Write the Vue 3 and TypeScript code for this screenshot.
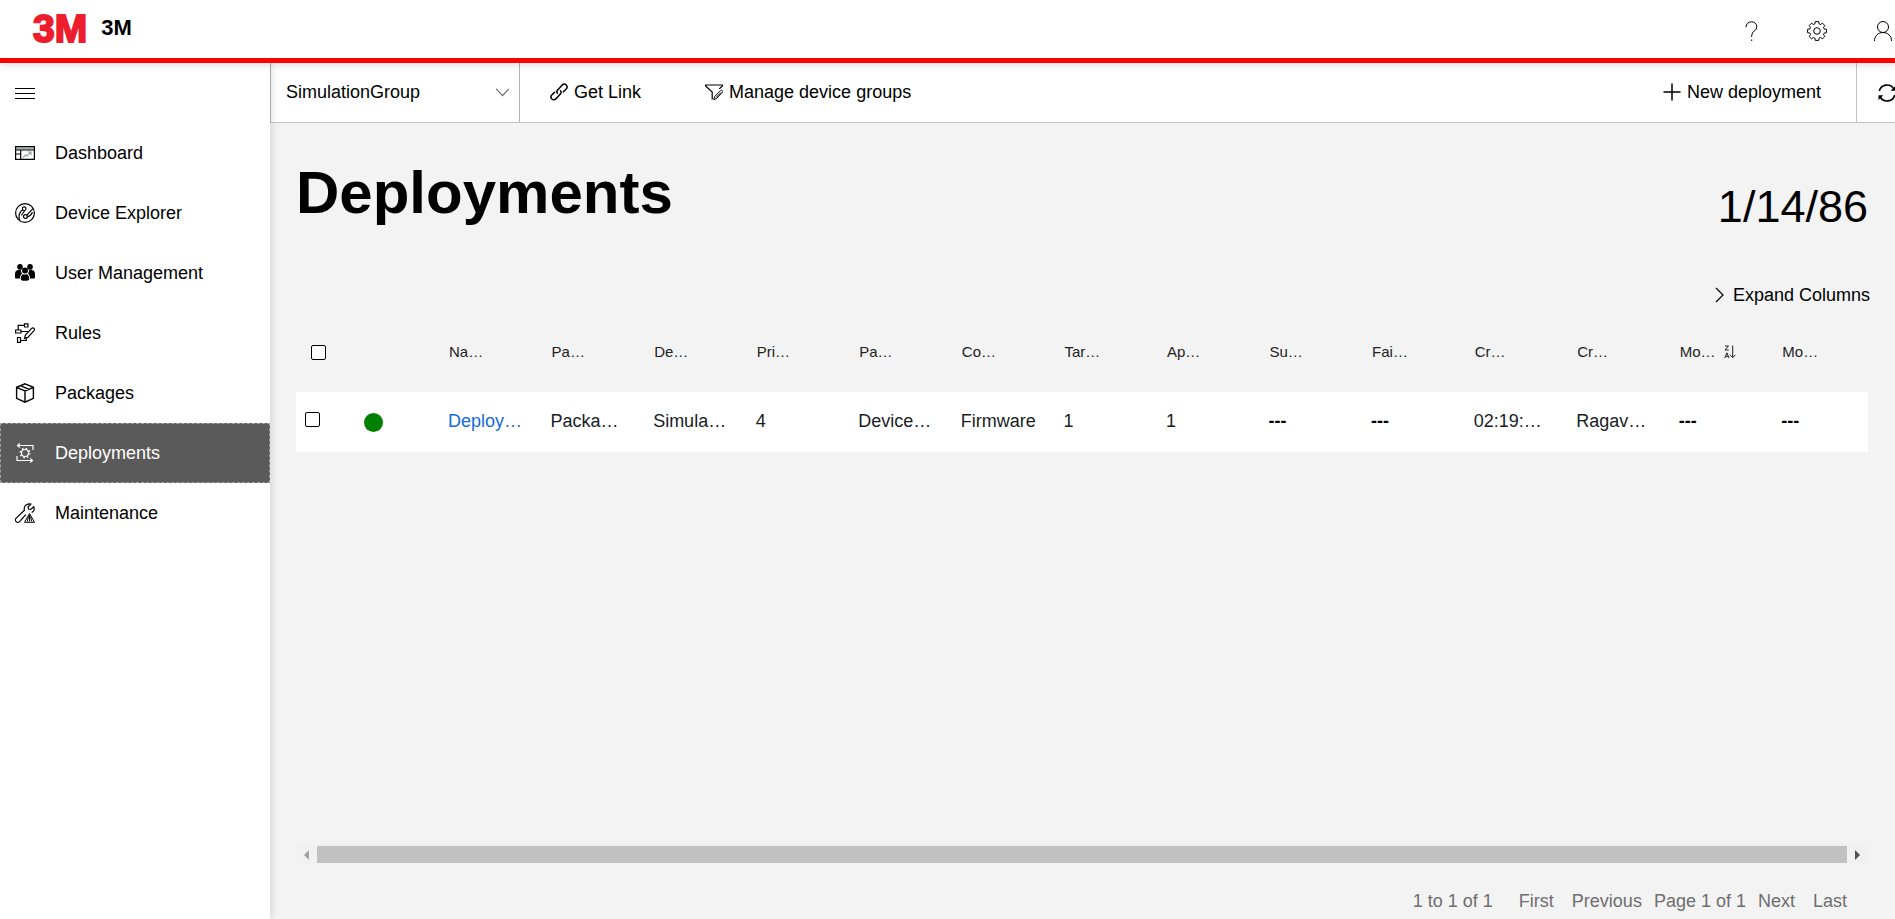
<script setup lang="ts">
import { ref } from 'vue'

interface NavItem {
  label: string
  icon: string
}

interface Column {
  head: string
  value: string
  sorted?: boolean
}

const navItems: NavItem[] = [
  { label: 'Dashboard', icon: 'dashboard' },
  { label: 'Device Explorer', icon: 'devices' },
  { label: 'User Management', icon: 'users' },
  { label: 'Rules', icon: 'rules' },
  { label: 'Packages', icon: 'packages' },
  { label: 'Deployments', icon: 'deployments' },
  { label: 'Maintenance', icon: 'maintenance' },
]

const columns: Column[] = [
  { head: 'Na…', value: 'Deploy…' },
  { head: 'Pa…', value: 'Packa…' },
  { head: 'De…', value: 'Simula…' },
  { head: 'Pri…', value: '4' },
  { head: 'Pa…', value: 'Device…' },
  { head: 'Co…', value: 'Firmware' },
  { head: 'Tar…', value: '1' },
  { head: 'Ap…', value: '1' },
  { head: 'Su…', value: '---' },
  { head: 'Fai…', value: '---' },
  { head: 'Cr…', value: '02:19:…' },
  { head: 'Cr…', value: 'Ragav…' },
  { head: 'Mo…', value: '---', sorted: true },
  { head: 'Mo…', value: '---' },
]

const active = ref('Deployments')
const group = ref('SimulationGroup')
const selected = ref(false)
</script>

<template>
  <div class="page">
    <header class="header">
      <a class="brand" href="#">
        <span class="logo">3M</span>
        <span class="brand-name">3M</span>
      </a>
      <div class="header-actions">
        <button type="button" aria-label="Help">
          <svg viewBox="0 0 20 20" class="thin"><path d="M5 6.2C5 3 7.2 .8 10.4 .8s5.4 2 5.4 4.9c0 4.4-5.1 4.300-5.100 8.800v1.500M10.700 18.500v1.500" /></svg>
        </button>
        <button type="button" aria-label="Settings">
          <svg viewBox="0 0 20 20" class="thin">
            <path d="M8.300 .6 11.700 .6 12.200 3 13.500 3.500 15.500 2.200 17.800 4.500 16.500 6.500 17 7.800 19.400 8.300 19.400 11.700 17 12.200 16.500 13.500 17.800 15.500 15.500 17.800 13.500 16.500 12.200 17 11.700 19.400 8.300 19.400 7.800 17 6.500 16.500 4.500 17.800 2.200 15.500 3.500 13.500 3 12.200 .6 11.700 .6 8.300 3 7.800 3.500 6.500 2.200 4.500 4.500 2.200 6.500 3.500 7.800 3z" />
            <circle cx="10" cy="10" r="3.300" />
          </svg>
        </button>
        <button type="button" aria-label="Account">
          <svg viewBox="0 0 20 20" class="thin"><circle cx="10" cy="6" r="5.500" /><path d="M1.500 20c0-5 3.500-8.500 8.500-8.500s8.500 3.500 8.500 8.500" /></svg>
        </button>
      </div>
    </header>

    <div class="body">
      <nav class="sidebar" aria-label="Main">
        <button type="button" class="nav-item" aria-label="Toggle navigation">
          <svg viewBox="0 0 20 20" class="menu"><path d="M0 5.500h20M0 10.500h20M0 15.500h20" /></svg>
        </button>
        <a
          v-for="item in navItems"
          :key="item.label"
          href="#"
          class="nav-item"
          :class="{ active: item.label === active }"
          @click.prevent="active = item.label"
        >
          <svg v-if="item.icon === 'dashboard'" viewBox="0 0 20 20">
            <path d="M1 5.500h18" class="muted" stroke-width="2" />
            <path d="M.6 3.600h18.800v12.800H.6zM.6 7h18.800M5.700 7v9.400M.6 11h5.100" stroke-width="1.200" />
            <path d="M8 14.500l2.500-2.500 1.500 1 3.500-3.500M12.500 9h3.500v3" class="muted" />
          </svg>
          <svg v-else-if="item.icon === 'devices'" viewBox="0 0 20 20">
            <circle cx="10" cy="10" r="9.400" />
            <circle cx="9.200" cy="5.700" r="1.800" />
            <circle cx="10.400" cy="13.500" r="1.900" />
            <path d="M7.700 6.700C4.500 8.800 3.400 12.500 4.500 17M9.500 7.500c0 1.800-2.800 2.500-2.800 5M11.800 12.100l6.200-6.400M12.300 13.900c2.200-.6 4.200-2.300 5.200-4.700" />
          </svg>
          <svg v-else-if="item.icon === 'users'" viewBox="0 0 20 20" class="solid">
            <circle cx="5" cy="3.900" r="2.800" />
            <circle cx="15" cy="3.900" r="2.800" />
            <circle cx="10" cy="7.500" r="3" />
            <path d="M5 15.500H1.200C.4 15.500 0 15 0 14V11c0-2.500 1.500-4 3.500-4h2.300c.1 1.500.5 2.700 1.300 3.500C5.700 11.700 5 13.300 5 15.500zM15 15.500h3.800c.8 0 1.200-.5 1.200-1.500v-3c0-2.500-1.500-4-3.500-4h-2.300c-.1 1.500-.5 2.700-1.300 3.500 1.400 1.200 2.100 2.800 2.100 5z" />
            <path d="M5.800 16.500c0-3.300 1.200-5.300 2.500-5.300.9.500 2.500.5 3.400 0 1.300 0 2.500 2 2.500 5.300 0 .7-1.900 1.300-4.200 1.300s-4.200-.6-4.200-1.300z" />
          </svg>
          <svg v-else-if="item.icon === 'rules'" viewBox="0 0 20 20">
            <path d="M9.500.8h3.500v3.200H9.500zM.6 7h5.400v3H.6zM2.500 14.500h3v4.800h-3zM9.500 2.400H3.200V7M6 8.500h7.500M5.500 17.500h5.800v-2.200" />
            <path d="M19 5.300c.8.800.5 1.900-.2 2.600l-6 6.500-3.300 1.100.9-3.400 6-6.500c.8-.8 1.800-1 2.600-.3z" />
          </svg>
          <svg v-else-if="item.icon === 'packages'" viewBox="0 0 20 20">
            <path d="M10 .8l8.400 3.500v11L10 19.200l-8.400-3.900v-11zM1.600 4.300L10 8l8.400-3.700M10 8v11.200M5.500 2.700l8.500 3.600" stroke-width="1.400" />
          </svg>
          <svg v-else-if="item.icon === 'deployments'" viewBox="0 0 20 20">
            <path d="M18 7V2.500H2.500M4.800.5l-2.300 2 2.300 2M2 13v4.500h15.500M15.200 15.500l2.300 2-2.300 2" stroke-width="1.200" />
            <circle cx="10" cy="10" r="3.500" />
            <circle cx="10" cy="10" r="4.700" stroke-width="1.400" stroke-dasharray="1.600 2.090" />
          </svg>
          <svg v-else viewBox="0 0 20 20">
            <path d="M1.200 18.600c-1-1-1-2.400 0-3.400l8.200-7.900C8.500 3.500 11 .6 14.800.8l1 .3-2.700 2.700.4 2.200 2.300.4 2.900-2.700c1 2.300.2 4.700-2 5.900M1.200 18.600c1 1 2.400 1 3.400 0l6.200-7" />
            <path d="M14.500 10.500L9.500 19.300h10zM13.500 13.500l-1.300 5M14.500 12v6.500M15.500 13.500l1.300 5" stroke-width="1" />
          </svg>
          <span>{{ item.label }}</span>
        </a>
      </nav>

      <main class="main">
        <div class="toolbar">
          <div class="group">
            <select v-model="group" aria-label="Device group">
              <option>SimulationGroup</option>
            </select>
            <svg class="caret" viewBox="0 0 16 10"><path d="M1 1l7 7.500L15 1" /></svg>
          </div>
          <button type="button" class="tool">
            <svg viewBox="0 0 18 18">
              <path d="M7.800 10.700C6.500 9.400 6.700 7.900 7.700 6.900l4.500-4.800c1.200-1.200 2.900-1.200 4-.1 1.100 1.100 1.100 2.700 0 3.900l-3.300 3.400M10.200 7.300c1.300 1.300 1.100 2.800.1 3.800l-4.500 4.800c-1.200 1.200-2.900 1.200-4 .1-1.100-1.100-1.100-2.700 0-3.900l3.300-3.400" stroke-width="1.500" />
            </svg>
            Get Link
          </button>
          <button type="button" class="tool manage">
            <svg viewBox="0 0 18 18">
              <path d="M7.200 16.500V9L.6 2.900V2h16.800v.9l-3.200 3" />
              <path d="M8.800 16.700l.7-3 6-6c.7-.6 1.500-.5 1.900 0s.4 1.200-.2 1.800l-5.700 6zM11 14.500l5-5" stroke-width="1" />
            </svg>
            Manage device groups
          </button>
          <button type="button" class="tool create">
            <svg viewBox="0 0 18 18"><path d="M9 .5v17M.5 9h17" stroke-width="1.500" /></svg>
            New deployment
          </button>
          <button type="button" class="refresh" aria-label="Refresh">
            <svg viewBox="0 0 18 18">
              <path d="M1.300 7A7.900 7.900 0 0 1 15.800 5M16.700 11A7.900 7.900 0 0 1 2.200 13" stroke-width="1.600" />
              <path d="M17.500 2v4.800h-4.800zM.5 16v-4.800h4.800z" class="fill" />
            </svg>
          </button>
        </div>

        <section class="content">
          <div class="heading">
            <h1>Deployments</h1>
            <span class="date">1/14/86</span>
          </div>
          <div class="expand-row">
            <button type="button" class="expand">
              <svg viewBox="0 0 10 16"><path d="M1 1l7 7-7 7" /></svg>
              Expand Columns
            </button>
          </div>

          <table class="grid">
            <colgroup>
              <col class="col-check" />
              <col class="col-status" />
              <col v-for="(c, i) in columns" :key="i" />
            </colgroup>
            <thead>
              <tr>
                <th><input v-model="selected" type="checkbox" aria-label="Select all rows" /></th>
                <th></th>
                <th v-for="(c, i) in columns" :key="i">
                  <span class="head">
                    {{ c.head }}
                    <svg v-if="c.sorted" viewBox="0 0 12 14" aria-label="Sorted descending">
                      <path d="M1 1h3.500L1 5h3.700M.8 13L2.900 7.800 5 13M1.600 11.300h2.600M8.700.5v12M6 9.800l2.700 2.900 2.700-2.900" />
                    </svg>
                  </span>
                </th>
              </tr>
            </thead>
            <tbody>
              <tr>
                <td><input v-model="selected" type="checkbox" aria-label="Select row" /></td>
                <td><span class="status"></span></td>
                <td v-for="(c, i) in columns" :key="i" :class="{ empty: c.value === '---' }">
                  <a v-if="i === 0" href="#">{{ c.value }}</a>
                  <template v-else>{{ c.value }}</template>
                </td>
              </tr>
            </tbody>
          </table>

          <div class="scrollbar">
            <button type="button" class="arrow off" aria-label="Scroll left">
              <svg viewBox="0 0 5 10"><path d="M5 0v10L0 5z" /></svg>
            </button>
            <div class="thumb"></div>
            <button type="button" class="arrow" aria-label="Scroll right">
              <svg viewBox="0 0 5 10"><path d="M0 0v10l5-5z" /></svg>
            </button>
          </div>

          <div class="pager">
            <span class="range">1 to 1 of 1</span>
            <button type="button">First</button>
            <button type="button" class="prev">Previous</button>
            <span>Page 1 of 1</span>
            <button type="button" class="next">Next</button>
            <button type="button">Last</button>
          </div>
        </section>
      </main>
    </div>
  </div>
</template>

<style>
body {
  margin: 0;
  overflow-x: hidden;
}
</style>

<style scoped>
.page {
  display: flex;
  flex-direction: column;
  min-height: 100vh;
  overflow: hidden;
  background: #f3f3f3;
  color: #000;
  font-family: "Liberation Sans", Arial, sans-serif;
  font-size: 18px;
  line-height: 20px;
}

*,
*::before,
*::after {
  box-sizing: border-box;
}

button {
  padding: 0;
  border: 0;
  background: none;
  color: inherit;
  font: inherit;
  cursor: pointer;
}

svg {
  flex: none;
  fill: none;
  stroke: currentColor;
  stroke-width: 1.2;
}

.fill,
.solid {
  fill: currentColor;
  stroke: none;
}

.muted {
  stroke: #a0a4aa;
}

.thin,
.menu {
  stroke-width: 1;
}

.header {
  display: flex;
  justify-content: space-between;
  align-items: center;
  position: relative;
  z-index: 3;
  height: 63px;
  padding: 0 2px 0 33px;
  border-bottom: 5px solid #f00;
  background: #fff;
  box-shadow: 0 0 10px rgba(0, 0, 0, 0.2);
}

.brand {
  display: flex;
  align-items: center;
  gap: 14px;
  color: #000;
  text-decoration: none;
  font-weight: bold;
}

.logo {
  color: #ee1d2d;
  font-size: 39px;
  line-height: 40px;
  -webkit-text-stroke: 2px #ee1d2d;
}

.brand-name {
  padding-bottom: 2px;
  font-size: 22px;
  line-height: 24px;
}

.header-actions {
  display: flex;
  gap: 46px;
  padding-top: 4px;
}

.header-actions button {
  display: flex;
}

.header-actions svg {
  width: 20px;
  height: 20px;
}

.body {
  display: flex;
  flex: 1;
}

.sidebar {
  position: relative;
  z-index: 2;
  flex: none;
  width: 270px;
  background: #fff;
  box-shadow: 0 0 10px rgba(0, 0, 0, 0.16);
}

.nav-item {
  display: flex;
  align-items: center;
  gap: 20px;
  width: 100%;
  height: 60px;
  padding: 0 15px;
  color: #000;
  text-decoration: none;
}

.nav-item svg {
  width: 20px;
  height: 20px;
}

.nav-item.active {
  background: #5a5a5a;
  color: #fff;
  outline: 1px dashed #a0a0a0;
  outline-offset: -1px;
}

.main {
  display: flex;
  flex: 1;
  flex-direction: column;
  min-width: 0;
}

.toolbar {
  display: flex;
  align-items: stretch;
  height: 60px;
  border-bottom: 1px solid #c4c4c4;
  background: #fff;
}

.group {
  display: flex;
  align-items: center;
  position: relative;
  width: 250px;
  border: solid #b4b4b4;
  border-width: 0 1px;
}

.group select {
  width: 100%;
  height: 100%;
  padding: 0 32px 1px 15px;
  border: 0;
  appearance: none;
  background: none;
  color: #000;
  font: inherit;
}

.caret {
  position: absolute;
  right: 9px;
  width: 15px;
  height: 9px;
  color: #666;
  pointer-events: none;
}

.tool {
  display: flex;
  align-items: center;
  gap: 6px;
  margin-left: 30px;
  padding-bottom: 2px;
}

.tool svg,
.refresh svg {
  width: 18px;
  height: 18px;
}

.tool.manage {
  margin-left: 64px;
}

.tool.create {
  margin-left: auto;
  padding-right: 35px;
}

.refresh {
  display: flex;
  align-items: center;
  flex: none;
  width: 39px;
  padding-left: 21px;
  border-left: 1px solid #c4c4c4;
}

.content {
  display: flex;
  flex: 1;
  flex-direction: column;
  padding: 32px 27px 8px 26px;
}

.heading {
  display: flex;
  justify-content: space-between;
  align-items: flex-end;
}

h1 {
  margin: 0;
  padding-bottom: 4px;
  font-size: 60px;
  line-height: 76px;
}

.date {
  padding-bottom: 1px;
  font-size: 45px;
  line-height: 54px;
}

.expand-row {
  display: flex;
  justify-content: flex-end;
  padding: 50px 0 17px;
}

.expand {
  display: flex;
  align-items: center;
  gap: 8px;
  margin-right: -2px;
}

.expand svg {
  width: 10px;
  height: 16px;
}

.grid {
  width: 100%;
  border-collapse: collapse;
  table-layout: fixed;
}

.col-check {
  width: 50px;
}

.col-status {
  width: 86px;
}

.grid th,
.grid td {
  height: 60px;
  padding: 0 0 2px 16px;
  text-align: left;
  white-space: nowrap;
}

.grid th {
  height: 70px;
  padding: 0 0 10px 17px;
  color: #222;
  font-size: 15px;
  font-weight: normal;
}

.grid th:first-child {
  padding-left: 15px;
}

.grid td:first-child {
  padding: 0 0 5px 9px;
}

.grid td:nth-child(2) {
  padding: 0 0 0 18px;
}

.grid tbody tr {
  background: #fff;
}

.grid td {
  color: #181d1f;
}

.grid td.empty {
  color: #000;
  font-weight: bold;
}

.grid a {
  color: #136bdb;
  text-decoration: none;
}

.grid input {
  display: block;
  width: 15px;
  height: 15px;
  margin: 0;
  border: 1px solid #000;
  border-radius: 2px;
  appearance: none;
  background: #fff;
}

.head {
  display: flex;
  align-items: center;
  gap: 8px;
}

.head svg {
  width: 12px;
  height: 14px;
  stroke-width: 1;
}

.status {
  display: block;
  width: 19px;
  height: 19px;
  border-radius: 50%;
  background: #008000;
}

.scrollbar {
  display: flex;
  align-items: center;
  height: 21px;
  margin-top: auto;
  background: #f1f1f1;
}

.arrow {
  display: flex;
  justify-content: center;
  align-items: center;
  width: 21px;
  height: 21px;
  color: #505050;
}

.arrow.off {
  color: #a3a3a3;
}

.arrow svg {
  width: 5px;
  height: 10px;
  fill: currentColor;
  stroke: none;
}

.thumb {
  flex: 1;
  height: 17px;
  background: #c1c1c1;
}

.pager {
  display: flex;
  justify-content: flex-end;
  gap: 18px;
  padding: 26px 21px 0 0;
  color: #6e6e6e;
}

.range {
  padding-right: 8px;
}

.prev,
.next {
  margin-right: -6px;
}

.next {
  margin-left: -6px;
  margin-right: 0;
}
</style>
